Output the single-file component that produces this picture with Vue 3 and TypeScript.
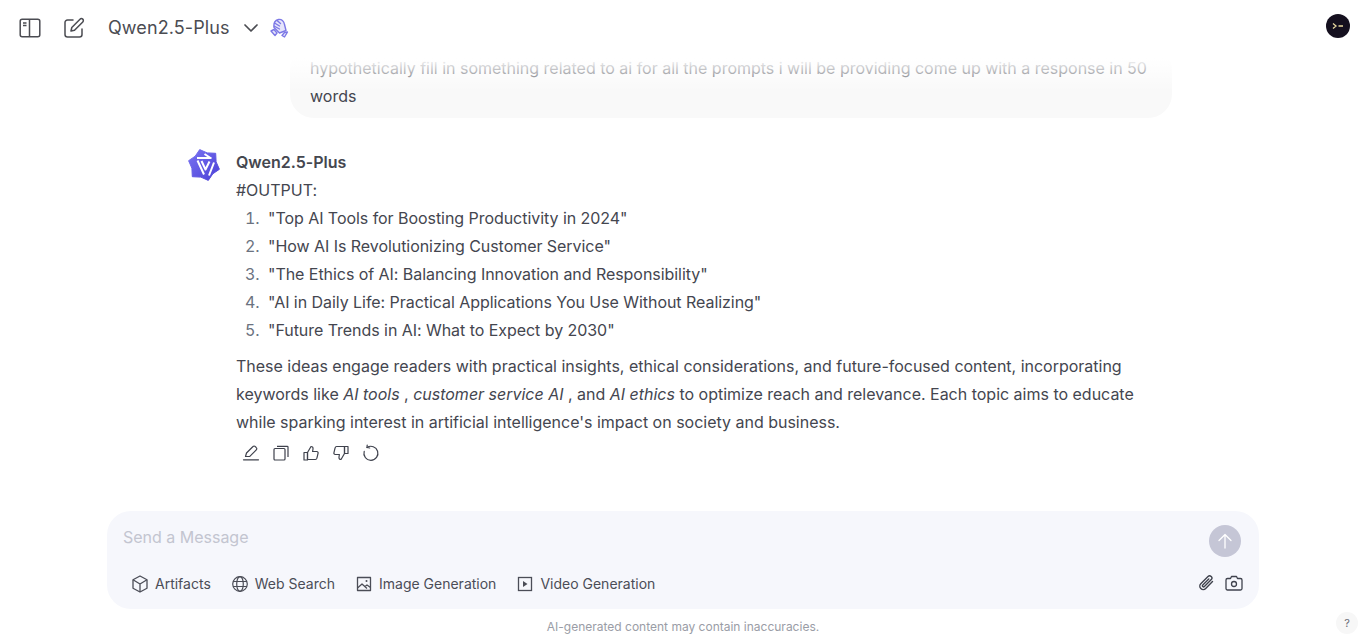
<script setup lang="ts">
const ideas = [
  '"Top AI Tools for Boosting Productivity in 2024"',
  '"How AI Is Revolutionizing Customer Service"',
  '"The Ethics of AI: Balancing Innovation and Responsibility"',
  '"AI in Daily Life: Practical Applications You Use Without Realizing"',
  '"Future Trends in AI: What to Expect by 2030"',
];
</script>

<template>
  <div class="page">
    <header class="topbar">
      <div class="topbar-left">
        <button class="icon-btn sidebar-btn" aria-label="Toggle sidebar">
          <svg width="22" height="20" viewBox="0 0 22 20" fill="none" stroke="currentColor" stroke-width="1.5">
            <rect x="1.2" y="1.2" width="19.6" height="17.6" rx="2" />
            <path d="M10.5 1.2v17.6M4 5h3.5M4 7.6h3.5" />
          </svg>
        </button>
        <button class="icon-btn edit-btn" aria-label="New chat">
          <svg width="22" height="22" viewBox="0 0 22 22" fill="none" stroke="currentColor" stroke-width="1.5" stroke-linecap="round" stroke-linejoin="round">
            <path d="M10 3H4.5A2.5 2.5 0 0 0 2 5.500V17.500A2.500 2.500 0 0 0 4.500 20H16.500A2.500 2.500 0 0 0 19 17.500V12" />
            <path d="M17 2.200a1.900 1.900 0 0 1 2.800 2.700L11.500 13.200 8 14l.8-3.500z" />
          </svg>
        </button>
        <span class="model-name">Qwen2.5-Plus</span>
        <svg class="chevron" width="14" height="8" viewBox="0 0 14 8" fill="none" stroke="currentColor" stroke-width="1.700" stroke-linecap="round" stroke-linejoin="round">
          <path d="M1 1l6 6 6-6" />
        </svg>
        <svg class="clap" width="20" height="20" viewBox="0 0 20 20" fill="#e6e5fb" stroke="#7c78e6" stroke-width="1.400" stroke-linejoin="round" stroke-linecap="round">
          <path d="M5 9.500C4.500 5 6.500 2 9.500 1.500c3-.5 5.500 1.500 6 5l1.500 6-6.500 2.500z" />
          <path d="M5.500 5l5 3M5 8l5.500 3M8 2.500l3.500 3" fill="none" />
          <path d="M2 13l3-1.500 3 3.500-2 2.500zM18.500 14l-3 .5-2.500 3 2.500 1.500z" />
        </svg>
      </div>
      <div class="user-avatar">
        <svg width="12" height="8" viewBox="0 0 12 8" fill="none" stroke="#e9d9a0" stroke-width="1.300">
          <path d="M1 1.500L4 4 1 6.500M6.500 4H11" />
        </svg>
      </div>
    </header>

    <main class="messages">
      <div class="thread">
        <div class="user-bubble">
          hypothetically fill in something related to ai for all the prompts i will be providing come up with a response in 50 words
        </div>

        <div class="reply">
          <svg class="reply-logo" width="32" height="32" viewBox="0 0 32 32">
            <defs>
              <linearGradient id="qwen" x1="0" y1="0" x2="1" y2="1">
                <stop offset="0" stop-color="#7a74f2" />
                <stop offset="1" stop-color="#4a3fd6" />
              </linearGradient>
            </defs>
            <path fill="url(#qwen)" stroke="url(#qwen)" stroke-width="1" stroke-linejoin="round" d="M11.700 .6L19.200 3.900 27.700 4.300 28.100 12.800 31.400 20.300 24.800 24.800 20.300 31.400 12.800 28.100 4.300 27.700 3.900 19.200 .6 11.700 7.200 7.200z" />
            <path fill="none" stroke="#fff" stroke-width="2" stroke-linejoin="round" d="M9 9H23.500M16.500 5l6 4M9.500 11.500L16 25.500M21 26.500L26 13.500M13.500 12l4 8.500 4-8" />
          </svg>
          <div class="reply-body">
            <div class="reply-name">Qwen2.5-Plus</div>
            <div>#OUTPUT:</div>
            <ol class="idea-list">
              <li v-for="idea in ideas" :key="idea">{{ idea }}</li>
            </ol>
            <p class="summary">
              These ideas engage readers with practical insights, ethical considerations, and future-focused content, incorporating keywords like <em>AI tools</em> , <em>customer service AI</em> , and <em>AI ethics</em> to optimize reach and relevance. Each topic aims to educate while sparking interest in artificial intelligence's impact on society and business.
            </p>
            <div class="actions">
              <svg width="18" height="18" viewBox="0 0 18 18" fill="none" stroke="currentColor" stroke-width="1.200" stroke-linejoin="round" stroke-linecap="round">
                <path d="M3.500 12.500l1-3.500 6.500-6.500a1.500 1.500 0 0 1 2.200 0l1.100 1.100a1.500 1.500 0 0 1 0 2.200L7.800 12.300z" />
                <path d="M1.500 15.800h15" />
              </svg>
              <svg width="18" height="18" viewBox="0 0 18 18" fill="none" stroke="currentColor" stroke-width="1.200">
                <rect x="2" y="4.500" width="11" height="11.500" rx="1" />
                <path d="M5 2.300h10.200a.8.8 0 0 1 .8.800V13" />
              </svg>
              <svg width="18" height="18" viewBox="0 0 18 18" fill="none" stroke="currentColor" stroke-width="1.200" stroke-linejoin="round">
                <path d="M5.500 8.500L9 2.500c1.500 0 2.200 1 2 2.500l-.4 2.500h4.200c.9 0 1.500.8 1.300 1.700l-1.200 5c-.2.700-.8 1.300-1.500 1.300H5.500z" />
                <rect x="2" y="8.500" width="3.500" height="7.500" />
              </svg>
              <svg width="18" height="18" viewBox="0 0 18 18" fill="none" stroke="currentColor" stroke-width="1.200" stroke-linejoin="round">
                <path d="M12.500 9.500L9 15.500c-1.500 0-2.200-1-2-2.500l.4-2.500H3.200c-.9 0-1.500-.8-1.300-1.700l1.200-5C3.300 3.100 3.900 2.500 4.600 2.500h7.900z" />
                <rect x="12.500" y="2.500" width="3.500" height="7" />
              </svg>
              <svg width="18" height="18" viewBox="0 0 18 18" fill="none" stroke="currentColor" stroke-width="1.200" stroke-linecap="round" stroke-linejoin="round">
                <path d="M5 3.500a7 7 0 1 1-2.800 3.800" />
                <path d="M5.200 1l-.2 2.500 2.700.5" />
              </svg>
            </div>
          </div>
        </div>
      </div>
    </main>

    <section class="composer">
      <div class="composer-top">
        <span class="placeholder">Send a Message</span>
        <button class="send" aria-label="Send">
          <svg width="16" height="16" viewBox="0 0 16 16" fill="none" stroke="#fff" stroke-width="1.300" stroke-linecap="round" stroke-linejoin="round">
            <path d="M8 15V1.500M2 7.500l6-6 6 6" />
          </svg>
        </button>
      </div>
      <div class="composer-bottom">
        <div class="tools">
          <span class="tool">
            <svg width="16" height="18" viewBox="0 0 16 18" fill="none" stroke="currentColor" stroke-width="1.300" stroke-linejoin="round">
              <path d="M8 1l7 3.800v8.400L8 17l-7-3.800V4.800z" />
              <path d="M1 4.800L8 9l7-4.200M8 9v8" />
            </svg>
            Artifacts
          </span>
          <span class="tool">
            <svg width="16" height="16" viewBox="0 0 16 16" fill="none" stroke="currentColor" stroke-width="1.200">
              <circle cx="8" cy="8" r="7.300" />
              <ellipse cx="8" cy="8" rx="3.300" ry="7.300" />
              <path d="M1 5.500h14M1 10.500h14" />
            </svg>
            Web Search
          </span>
          <span class="tool">
            <svg width="16" height="16" viewBox="0 0 16 16" fill="none" stroke="currentColor" stroke-width="1.300" stroke-linejoin="round">
              <rect x="1.500" y="1.500" width="13" height="13" />
              <path d="M1.500 12l4.500-4 5 4.500M9 10.500l2-1.500 3.500 2.500" />
              <circle cx="10.500" cy="5" r="1" fill="currentColor" stroke="none" />
            </svg>
            Image Generation
          </span>
          <span class="tool">
            <svg width="16" height="16" viewBox="0 0 16 16" fill="none" stroke="currentColor" stroke-width="1.300">
              <rect x="1.500" y="1.500" width="13" height="13" />
              <path d="M6 5l4.500 3L6 11z" fill="currentColor" stroke="none" />
            </svg>
            Video Generation
          </span>
        </div>
        <div class="attach">
          <svg width="18" height="18" viewBox="0 0 18 18" fill="none" stroke="currentColor" stroke-width="1.400" stroke-linecap="round">
            <path d="M15.500 7.500l-6.800 7a3.400 3.400 0 0 1-4.900-4.800l7.200-7.300a2.300 2.300 0 0 1 3.300 3.200l-6.900 7a1.100 1.100 0 0 1-1.600-1.600l6-6.100" />
          </svg>
          <svg width="18" height="16" viewBox="0 0 18 16" fill="none" stroke="currentColor" stroke-width="1.300" stroke-linejoin="round">
            <path d="M2.500 3.500h3L6.500 1.500h5l1 2h3a1.500 1.500 0 0 1 1.500 1.500v8.500a1.500 1.500 0 0 1-1.500 1.500h-13A1.500 1.500 0 0 1 1 13.500V5a1.500 1.500 0 0 1 1.500-1.500z" />
            <circle cx="9" cy="9" r="2.500" />
          </svg>
        </div>
      </div>
    </section>

    <footer class="disclaimer">AI-generated content may contain inaccuracies.</footer>
    <div class="help">?</div>
  </div>
</template>

<style scoped>
.page {
  position: relative;
  height: 641px;
  display: flex;
  flex-direction: column;
  overflow: hidden;
  background: #fff;
  color: #44464f;
  font-family: Inter, "Liberation Sans", sans-serif;
  font-size: 16px;
  line-height: 28px;
  letter-spacing: -0.01px;
}
.topbar {
  position: absolute;
  top: 0;
  left: 0;
  right: 0;
  z-index: 2;
  height: 92px;
  padding: 14px 16px 0 19px;
  box-sizing: border-box;
  display: flex;
  justify-content: space-between;
  align-items: flex-start;
  background: linear-gradient(to bottom, #fff 0, #fff 58px, rgba(255, 255, 255, 0.55) 74px, rgba(255, 255, 255, 0) 92px);
}
.topbar-left {
  display: flex;
  align-items: center;
  height: 28px;
  color: #4b4c52;
}
.icon-btn {
  display: flex;
  padding: 0;
  border: 0;
  background: none;
  color: inherit;
}
.edit-btn {
  margin-left: 22px;
}
.model-name {
  margin-left: 23px;
  font-size: 18px;
  letter-spacing: 0.1px;
  color: #4b4c52;
}
.chevron {
  margin-left: 14px;
}
.clap {
  margin-left: 11px;
}
.user-avatar {
  width: 24px;
  height: 24px;
  border-radius: 50%;
  background: #15101f;
  display: flex;
  align-items: center;
  justify-content: center;
}
.messages {
  flex: 1;
  min-height: 0;
  display: flex;
  flex-direction: column;
  justify-content: flex-end;
  overflow: hidden;
}
.thread {
  width: 1000px;
  margin: 0 auto;
  padding: 0 11px 49px 5px;
  box-sizing: border-box;
}
.user-bubble {
  margin-left: 102px;
  padding: 8px 20px;
  border-radius: 24px;
  background: #f9f9f9;
}
.reply {
  margin-top: 30px;
  display: flex;
  gap: 16px;
}
.reply-logo {
  flex: none;
  margin-top: 1px;
}
.reply-body {
  flex: 1;
  min-width: 0;
}
.reply-name {
  font-weight: 600;
  color: #45474f;
}
.idea-list {
  margin: 0;
  padding-left: 32px;
  letter-spacing: -0.05px;
}
.idea-list li::marker {
  content: counter(list-item) ".  ";
  color: #6b7280;
}
.summary {
  margin: 8px 0 0;
}
.actions {
  margin-top: 8px;
  padding-left: 6px;
  display: flex;
  gap: 12px;
  height: 18px;
  color: #3f424d;
}
.composer {
  flex: none;
  width: 1152px;
  height: 98px;
  margin: 0 auto;
  box-sizing: border-box;
  padding: 12px 16px 0 16px;
  border-radius: 24px;
  background: #f6f7fc;
}
.composer-top {
  display: flex;
  justify-content: space-between;
  align-items: flex-start;
  height: 34px;
}
.placeholder {
  color: #c3c5d0;
}
.send {
  width: 32px;
  height: 32px;
  margin: 2px 2px 0 0;
  padding: 0;
  border: 0;
  border-radius: 50%;
  background: #c5c6d6;
  display: flex;
  align-items: center;
  justify-content: center;
}
.composer-bottom {
  margin-top: 15px;
  display: flex;
  justify-content: space-between;
  align-items: center;
  height: 24px;
}
.tools {
  display: flex;
  gap: 21px;
  padding-left: 9px;
}
.tool {
  display: flex;
  align-items: center;
  gap: 7px;
  font-size: 14px;
  letter-spacing: 0;
  color: #4b4d57;
}
.attach {
  display: flex;
  gap: 10px;
  align-items: center;
  margin-top: -2px;
  color: #3f424d;
}
.disclaimer {
  flex: none;
  height: 32px;
  padding-top: 8px;
  box-sizing: border-box;
  text-align: center;
  font-size: 12px;
  line-height: 20px;
  letter-spacing: 0;
  color: #9a9da6;
}
.help {
  position: absolute;
  right: 8px;
  bottom: 7px;
  width: 22px;
  height: 22px;
  border-radius: 50%;
  background: #f7f7f7;
  color: #6b6e76;
  font-size: 11px;
  line-height: 22px;
  text-align: center;
}
</style>
